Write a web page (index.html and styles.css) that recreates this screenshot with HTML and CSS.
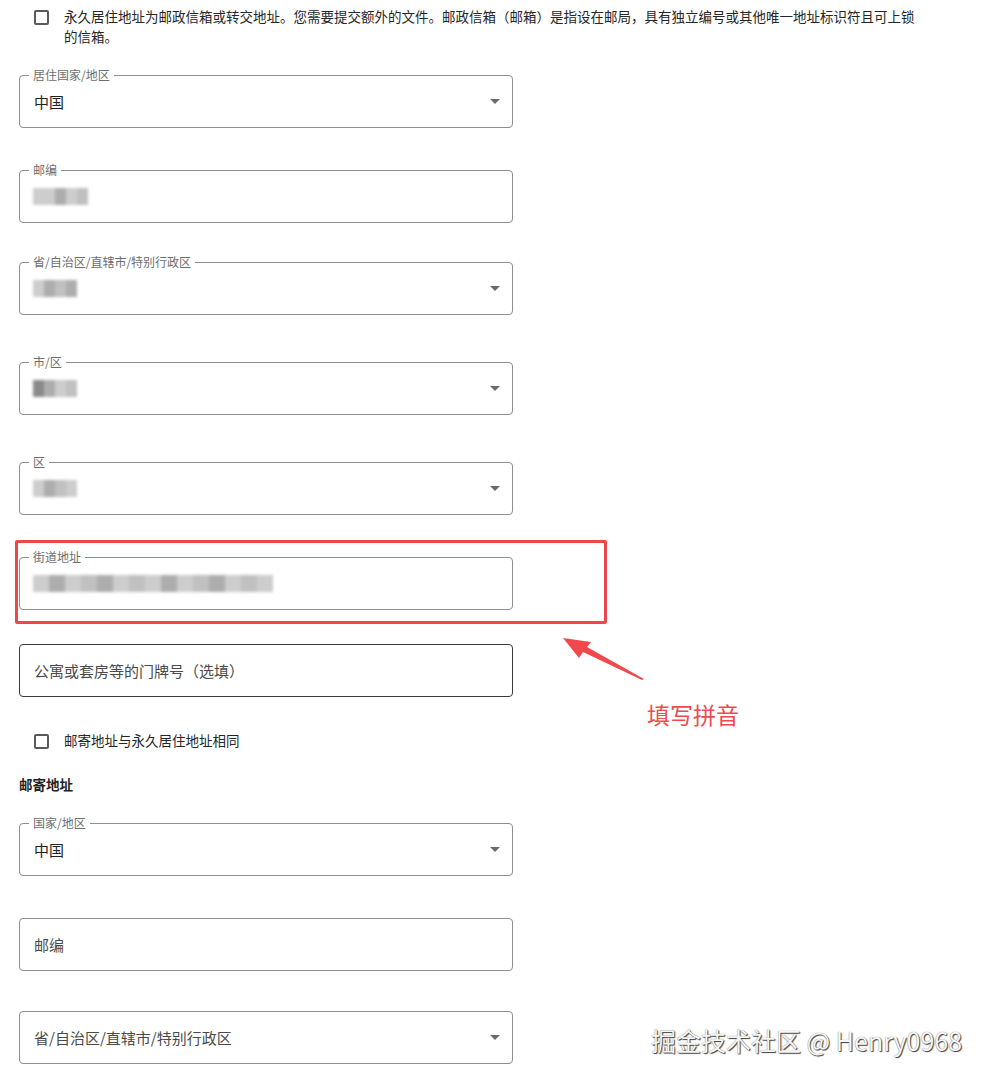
FILE: index.html
```html
<!DOCTYPE html>
<html lang="zh-CN">
<head>
<meta charset="utf-8">
<title>地址</title>
<link rel="stylesheet" href="styles.css">
</head>
<body>
<main class="page">
  <div class="check-row check-row--top">
    <span class="checkbox"></span>
    <p class="check-text">永久居住地址为邮政信箱或转交地址。您需要提交额外的文件。邮政信箱（邮箱）是指设在邮局，具有独立编号或其他唯一地址标识符且可上锁的信箱。</p>
  </div>

  <div class="field gap-a">
    <span class="field__label">居住国家/地区</span>
    <span class="field__value">中国</span>
    <span class="field__arrow"></span>
  </div>

  <div class="field gap-b">
    <span class="field__label">邮编</span>
    <span class="blur"><i class="b1"></i><i class="b1"></i><i class="b2"></i><i class="b1"></i><i class="b3"></i></span>
  </div>

  <div class="field gap-c">
    <span class="field__label">省/自治区/直辖市/特别行政区</span>
    <span class="blur"><i class="b1"></i><i class="b2"></i><i class="b3"></i><i class="b2"></i></span>
    <span class="field__arrow"></span>
  </div>

  <div class="field gap-d">
    <span class="field__label">市/区</span>
    <span class="blur"><i class="b4"></i><i class="b2"></i><i class="b1"></i><i class="b3"></i></span>
    <span class="field__arrow"></span>
  </div>

  <div class="field gap-d">
    <span class="field__label">区</span>
    <span class="blur"><i class="b1"></i><i class="b2"></i><i class="b3"></i><i class="b1"></i></span>
    <span class="field__arrow"></span>
  </div>

  <div class="field gap-b">
    <span class="field__label">街道地址</span>
    <span class="blur blur--long"><i class="b1"></i><i class="b2"></i><i class="b1"></i><i class="b3"></i><i class="b2"></i><i class="b1"></i><i class="b3"></i><i class="b1"></i><i class="b2"></i><i class="b1"></i><i class="b3"></i><i class="b2"></i><i class="b1"></i><i class="b3"></i><i class="b1"></i></span>
  </div>

  <div class="field field--dark gap-e">
    <span class="field__placeholder">公寓或套房等的门牌号（选填）</span>
  </div>

  <div class="check-row check-row--second">
    <span class="checkbox"></span>
    <p class="check-text">邮寄地址与永久居住地址相同</p>
  </div>

  <h2 class="section-title">邮寄地址</h2>

  <div class="field gap-f">
    <span class="field__label">国家/地区</span>
    <span class="field__value">中国</span>
    <span class="field__arrow"></span>
  </div>

  <div class="field gap-b">
    <span class="field__placeholder">邮编</span>
  </div>

  <div class="field gap-g">
    <span class="field__placeholder">省/自治区/直辖市/特别行政区</span>
    <span class="field__arrow"></span>
  </div>

  <div class="highlight"></div>
  <svg class="pointer" width="100" height="60" viewBox="0 0 100 60" aria-hidden="true">
    <polygon points="3,18 31,22 27,27 84,59 82,60 23,32 19,38" fill="#f0484d"/>
  </svg>
  <div class="note">填写拼音</div>
  <div class="watermark">掘金技术社区 @ Henry0968</div>
</main>
</body>
</html>
```

FILE: styles.css
```css
* { box-sizing: border-box; }

html, body {
  margin: 0;
  padding: 0;
  background: #ffffff;
}

body {
  font-family: "Noto Sans CJK SC", "Noto Sans", sans-serif;
  color: #222222;
  width: 994px;
  height: 1085px;
  overflow: hidden;
}

.page {
  position: relative;
  padding-top: 6px;
  height: 1085px;
}

.check-row {
  display: flex;
  align-items: flex-start;
  gap: 15px;
  padding-left: 34px;
}

.check-row--second {
  margin-top: 33px;
}

.checkbox {
  flex: none;
  width: 15px;
  height: 15px;
  margin-top: 4px;
  border: 2px solid #5a5a5a;
  border-radius: 2px;
}

.check-text {
  margin: 0;
  width: 858px;
  font-size: 13.5px;
  line-height: 20px;
  color: #262626;
}

.section-title {
  margin: 24px 0 0 19px;
  font-size: 13.5px;
  line-height: 20px;
  font-weight: 700;
  color: #222222;
}

.field {
  position: relative;
  display: flex;
  align-items: center;
  width: 494px;
  height: 53px;
  margin-left: 19px;
  padding: 0 12px 0 14px;
  border: 1px solid #8e8e8e;
  border-radius: 4px;
}

.field--dark {
  border-color: #3a3a3a;
}

.gap-a { margin-top: 29px; }
.gap-b { margin-top: 42px; }
.gap-c { margin-top: 39px; }
.gap-d { margin-top: 47px; }
.gap-e { margin-top: 34px; }
.gap-f { margin-top: 29px; }
.gap-g { margin-top: 40px; }

.field__label {
  position: absolute;
  top: -8px;
  left: 9px;
  padding: 0 4px;
  background: #ffffff;
  font-size: 12px;
  line-height: 14px;
  color: #6e6e6e;
}

.field__value {
  font-size: 15px;
  line-height: 20px;
  color: #222222;
}

.field__placeholder {
  font-size: 15px;
  line-height: 20px;
  color: #4a4a4a;
}

.field__arrow {
  margin-left: auto;
  width: 0;
  height: 0;
  border-left: 5px solid transparent;
  border-right: 5px solid transparent;
  border-top: 5px solid #6a6a6a;
}

.blur {
  display: flex;
  height: 17px;
  margin-left: -1px;
  filter: blur(1.4px);
}

.blur i {
  display: block;
  width: 11px;
  height: 17px;
}

.blur--long i {
  width: 16px;
}

.b1 { background: #cdcdcd; }
.b2 { background: #adadad; }
.b3 { background: #c0c0c0; }
.b4 { background: #8a8a8a; }

.highlight {
  position: absolute;
  left: 15px;
  top: 540px;
  width: 592px;
  height: 84px;
  border: 3px solid #ec474c;
  border-radius: 2px;
}

.pointer {
  position: absolute;
  left: 560px;
  top: 620px;
}

.note {
  position: absolute;
  left: 647px;
  top: 699px;
  font-size: 23px;
  line-height: 30px;
  color: #ee4a50;
}

.watermark {
  position: absolute;
  left: 651px;
  top: 1024px;
  font-size: 25px;
  line-height: 32px;
  color: #f6f6f6;
  text-shadow: 1px 1px 1px rgba(0, 0, 0, 0.75), 0 0 1px rgba(0, 0, 0, 0.6);
  white-space: nowrap;
}
```
